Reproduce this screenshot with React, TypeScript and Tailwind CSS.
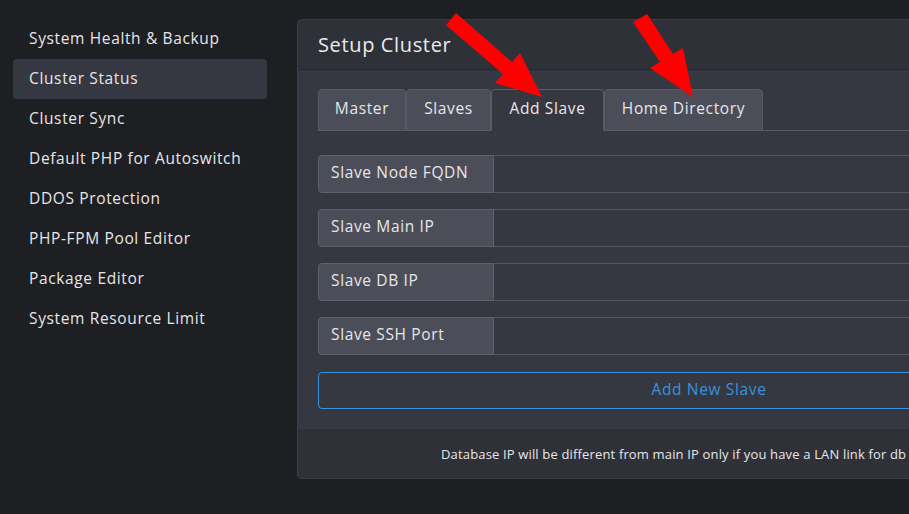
const menuItems = [
  "System Health & Backup",
  "Cluster Status",
  "Cluster Sync",
  "Default PHP for Autoswitch",
  "DDOS Protection",
  "PHP-FPM Pool Editor",
  "Package Editor",
  "System Resource Limit",
];

const tabs = [
  { label: "Master", width: "w-[88px]" },
  { label: "Slaves", width: "w-[85px]" },
  { label: "Add Slave", width: "w-[113px]", active: true },
  { label: "Home Directory", width: "w-[159px]" },
];

const fields = ["Slave Node FQDN", "Slave Main IP", "Slave DB IP", "Slave SSH Port"];

function Sidebar() {
  return (
    <div className="w-[297px] shrink-0 pl-[13px] pr-[30px] pt-[19px]">
      {menuItems.map((item) => (
        <div
          key={item}
          className={
            "h-[40px] flex items-center px-[16px] rounded-[4px] text-[15.5px] text-[#e6e6e8] " +
            (item === "Cluster Status" ? "bg-[#353741]" : "")
          }
        >
          {item}
        </div>
      ))}
    </div>
  );
}

function Tabs() {
  return (
    <div className="flex h-[42px] border-b border-[#585b64]">
      {tabs.map((tab) => (
        <div
          key={tab.label}
          className={
            tab.width +
            " h-[42px] flex items-center justify-center pb-[2px] rounded-t-[4px] border text-[15.5px] text-[#e6e6e8] " +
            (tab.active
              ? "bg-[#363841] border-[#585b64] border-b-[#363841]"
              : "bg-[#4b4e58] border-[#585b64]")
          }
        >
          {tab.label}
        </div>
      ))}
    </div>
  );
}

function InputGroup({ label }: { label: string }) {
  return (
    <div className="flex h-[38px]">
      <div className="w-[176px] shrink-0 flex items-center px-[12px] pb-[2px] bg-[#4b4e58] border border-[#5e616a] rounded-l-[4px] text-[15.5px] text-[#e6e6e8]">
        {label}
      </div>
      <input
        type="text"
        className="flex-1 bg-[#363841] border border-l-0 border-[#55585f] rounded-r-[4px] outline-none"
      />
    </div>
  );
}

export default function App() {
  return (
    <div
      className="relative flex w-full h-[514px] overflow-hidden bg-[#1e1f22] tracking-[0.04em]"
      style={{ fontFamily: '"Open Sans", sans-serif' }}
    >
      <Sidebar />
      <div className="w-[824px] shrink-0 mt-[19px] h-[460px] flex flex-col rounded-[5px] border border-[#3a3c44] bg-[#363841]">
        <div className="h-[50px] flex items-center px-[20px] bg-[#2f3139] border-b border-[#25272d] rounded-t-[5px] text-[20px] text-[#ebebed]">
          Setup Cluster
        </div>
        <div className="flex-1 px-[20px] pt-[19px]">
          <Tabs />
          <div className="flex flex-col gap-[16px] mt-[24px]">
            {fields.map((f) => (
              <InputGroup key={f} label={f} />
            ))}
          </div>
          <button className="mt-[17px] w-full h-[37px] pb-[2px] border border-[#3a91dc] rounded-[4px] text-[15.5px] text-[#3a91dc]">
            Add New Slave
          </button>
        </div>
        <div className="h-[49px] flex items-center pl-[143px] pt-[3px] bg-[#2f3139] rounded-b-[5px] text-[13px] tracking-[0.012em] whitespace-nowrap text-[#e6e6e8]">
          Database IP will be different from main IP only if you have a LAN link for db
        </div>
      </div>

      <svg className="absolute left-0 top-0 pointer-events-none" width="909" height="514">
        <polygon
          fill="#ff0000"
          points="456,13 512,62 520,53 542,97 495,83 503,74 446,25"
        />
        <polygon
          fill="#ff0000"
          points="647,14 673,54 683,48 693,97 650,68 660,62 633,22"
        />
      </svg>
    </div>
  );
}
